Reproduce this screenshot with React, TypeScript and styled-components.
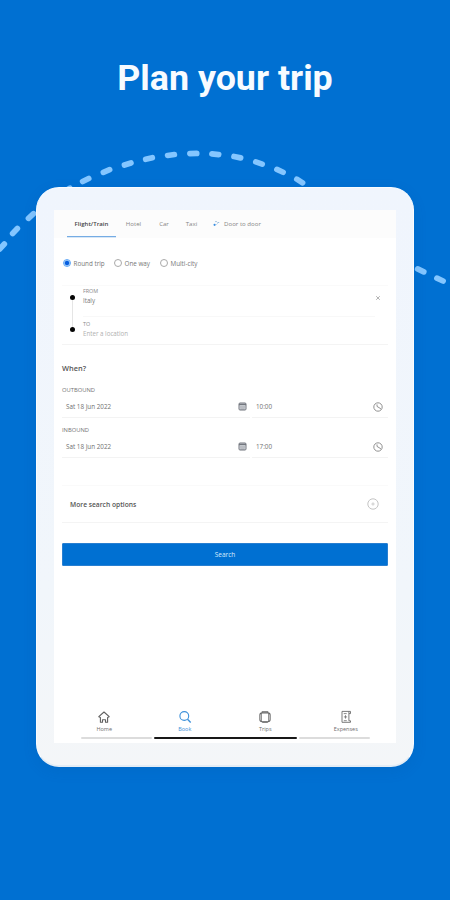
import React from "react";
import styled, { createGlobalStyle } from "styled-components";

const Global = createGlobalStyle`
  * { box-sizing: border-box; }
  body { margin: 0; background: #0070d2; }
`;

const Poster = styled.main`
  position: relative;
  width: 450px;
  height: 900px;
  overflow: hidden;
  display: flex;
  flex-direction: column;
  align-items: center;
  background: #0070d2;
  font-family: "Open Sans", "Noto Sans", sans-serif;
`;

const Title = styled.h1`
  margin: 56px 0 0;
  height: 131px;
  flex: none;
  font: 700 35.8px/44px Roboto, sans-serif;
  color: #f7fbff;
  white-space: nowrap;
`;

const Trail = styled.svg`
  position: absolute;
  left: 0;
  top: 140px;
  width: 450px;
  height: 160px;
`;

const Tablet = styled.section`
  position: relative;
  width: 378px;
  height: 580px;
  flex: none;
  border-radius: 23px;
  background: linear-gradient(#f0f5fd, #f1f6fb 70%, #f4f6f8);
  border: 1px solid #fafcff;
  border-bottom: 2px solid #e3ecf5;
  padding: 22px 17px 22px 17px;
  box-shadow: 0 4px 14px rgba(0, 70, 150, 0.12);
`;

const Screen = styled.div`
  height: 533px;
  display: flex;
  flex-direction: column;
  background: #fff;
`;

const Tabs = styled.nav`
  display: flex;
  height: 28px;
  padding-left: 13px;
  background: #fcfcfc;
`;

const Tab = styled.div<{ $width: number; $active?: boolean }>`
  width: ${(p) => p.$width}px;
  height: 27px;
  display: flex;
  justify-content: center;
  gap: 4px;
  font-size: 6.1px;
  line-height: 27px;
  font-weight: ${(p) => (p.$active ? 600 : 400)};
  color: ${(p) => (p.$active ? "#454545" : "#858585")};
  box-shadow: ${(p) => (p.$active ? "inset 0 -1px #75ace4, 0 0.5px #b5d2f0" : "none")};
  white-space: nowrap;
  svg { margin-top: 10px; }
`;

const Form = styled.div`
  padding: 0 8px;
  display: flex;
  flex-direction: column;
`;

const Radios = styled.div`
  display: flex;
  height: 47px;
  padding: 20px 0 0 0.5px;
`;

const Choice = styled.label<{ $width: number }>`
  display: flex;
  align-items: center;
  gap: 3px;
  width: ${(p) => p.$width}px;
  height: 10px;
  font-size: 6.3px;
  color: #777;
  white-space: nowrap;
`;

const Dot = styled.span<{ $on?: boolean }>`
  width: 8px;
  height: 8px;
  flex: none;
  border-radius: 50%;
  border: 1px solid ${(p) => (p.$on ? "#62a8f6" : "#a9a9a9")};
  background: ${(p) => (p.$on ? "radial-gradient(circle, #075fe0 42%, #b9dafa 65%)" : "#fff")};
`;

const Route = styled.div`
  display: grid;
  grid-template-columns: 21px 1fr 13px;
  height: 60px;
  border-top: 1px solid #fafafa;
  border-bottom: 1px solid #f4f4f4;
`;

const Stops = styled.div`
  display: flex;
  flex-direction: column;
  align-items: center;
  padding-top: 9px;
  i { width: 5px; height: 5px; flex: none; border-radius: 50%; background: #050505; }
  span { width: 1px; height: 27px; background: #e5e5e5; }
`;

const Places = styled.div`
  display: flex;
  flex-direction: column;
`;

const Place = styled.div<{ $empty?: boolean }>`
  height: ${(p) => (p.$empty ? 28 : 31)}px;
  padding-top: ${(p) => (p.$empty ? 2 : 0)}px;
  border-bottom: 1px solid ${(p) => (p.$empty ? "transparent" : "#f8f8f8")};
  font-size: 6.2px;
  line-height: 10.5px;
  color: ${(p) => (p.$empty ? "#b0b0b0" : "#777")};
  small { display: block; font-size: 5.4px; line-height: 10px; color: #888; }
`;

const Clear = styled.span`
  display: flex;
  align-items: center;
  height: 24px;
`;

const Heading = styled.h2`
  margin: 17px 0 11px;
  font-size: 7.4px;
  line-height: 12px;
  font-weight: 600;
  color: #555;
`;

const Leg = styled.div`
  height: 40px;
`;

const LegName = styled.div`
  height: 11px;
  font-size: 5.8px;
  line-height: 11px;
  color: #737373;
`;

const Fields = styled.div`
  display: grid;
  grid-template-columns: 188px 136px;
  gap: 2px;
`;

const Field = styled.div<{ $end: number }>`
  height: 22px;
  display: flex;
  align-items: center;
  justify-content: space-between;
  padding: 0 ${(p) => p.$end}px 0 4px;
  border-bottom: 1px solid #f3f3f3;
  font-size: 6.3px;
  color: #707070;
`;

const More = styled.div`
  margin-top: 20px;
  height: 38px;
  display: flex;
  align-items: center;
  justify-content: space-between;
  padding: 0 9px 0 8px;
  border-top: 1px solid #fafafa;
  border-bottom: 1px solid #f4f4f4;
  font-size: 6.7px;
  font-weight: 600;
  color: #555;
`;

const Search = styled.button`
  margin: 20px 0 0;
  height: 23px;
  padding: 0;
  border: 1px solid #287fd1;
  border-radius: 1px;
  background: #0070d2;
  color: #d9ebfc;
  font: 400 6.5px "Open Sans", sans-serif;
`;

const Bottom = styled.footer`
  margin-top: auto;
  height: 35px;
`;

const Menu = styled.nav`
  display: grid;
  grid-template-columns: repeat(4, 1fr);
  height: 29px;
  padding: 0 10px;
`;

const Item = styled.div<{ $active?: boolean }>`
  display: flex;
  flex-direction: column;
  align-items: center;
  padding-top: 2px;
  gap: 1px;
  font-size: 5.5px;
  line-height: 8px;
  color: ${(p) => (p.$active ? "#3b8fd8" : "#6e6e6e")};
`;

const Bars = styled.div`
  display: grid;
  grid-template-columns: 71px 143px 71px;
  gap: 2px;
  align-items: center;
  padding-left: 27px;
`;

const Bar = styled.span<{ $dark?: boolean }>`
  height: ${(p) => (p.$dark ? 2.4 : 1.6)}px;
  border-radius: 2px;
  background: ${(p) => (p.$dark ? "#181818" : "#dcdcdc")};
`;

const dashes = [
  [2, 246.5, -47], [15, 231, -46], [31, 216, -42], [48, 202, -36], [67, 190, -32],
  [85.7, 180, -27], [106.5, 171, -23], [127.7, 164, -18], [149, 158.5, -13],
  [171, 155, -8], [193.3, 153.5, -1], [215.3, 154.2, 6], [237.3, 157.2, 12],
  [259, 163, 19], [280, 170.8, 25], [299.7, 181, 32], [420.7, 270.4, 26], [440, 279.6, 25],
];

const Calendar = () => (
  <svg width="9" height="9" viewBox="0 0 9 9" fill="none" stroke="#73777e">
    <rect x="1" y="1" width="7" height="7" rx="1" fill="#e0e3e8" />
    <path d="M1 2.5h7" strokeWidth="1.5" />
    <path d="M2 5h5M2.2 7h4.6" strokeWidth=".7" />
  </svg>
);

const Clock = () => (
  <svg width="10" height="10" viewBox="0 0 10 10" fill="none" stroke="#868686" strokeWidth=".9">
    <circle cx="5" cy="5" r="4.2" />
    <path d="M4 2.4v2l3.9 2.4" />
  </svg>
);

const Plus = () => (
  <svg width="12" height="12" viewBox="0 0 12 12" fill="none" stroke="#bdbdbd" strokeWidth=".9">
    <circle cx="6" cy="6" r="5.2" />
    <path d="M4.3 6h3.4M6 4.3v3.4" strokeWidth=".7" />
  </svg>
);

const House = () => (
  <svg width="14" height="14" viewBox="0 0 14 14" fill="none" stroke="#606060" strokeWidth="1.1">
    <path d="M1.8 6.7 7 2l5.2 4.7-1.6.7v4.9H8.5V9.8h-3v2.5H3.4V7.4z" strokeLinejoin="round" />
  </svg>
);

const Glass = () => (
  <svg width="14" height="14" viewBox="0 0 14 14" fill="none" stroke="#3e91da" strokeWidth="1.1">
    <circle cx="6.3" cy="6" r="4.4" />
    <path d="m9.5 9.2 3.2 3.3" strokeWidth="1.4" />
  </svg>
);

const Suitcase = () => (
  <svg width="14" height="14" viewBox="0 0 14 14" fill="none" stroke="#666" strokeWidth="1.1">
    <rect x="1.9" y="2.9" width="10.2" height="8.8" rx="2.2" />
    <path d="M3.5 3.2v8.2M10.5 3.2v8.2" strokeWidth=".7" />
    <path d="M4.3 2.7V1.8h5.4v.9M4.2 12.2h5.6" />
  </svg>
);

const Receipt = () => (
  <svg width="14" height="14" viewBox="0 0 14 14" fill="none" stroke="#6c6c6c" strokeWidth=".9">
    <path d="M3 12.3V1.4h8.5v2.2H9.9v7.2h1.6v1.5H3ZM9.9 3.6V1.4" />
    <path d="M4.7 3.6h3M6.5 5.2v3.4M4.9 6.9h3.2M4.8 10.7h3" strokeWidth=".8" />
  </svg>
);

const DoorMark = () => (
  <svg width="7" height="7" viewBox="0 0 7 7" fill="none">
    <circle cx="1.6" cy="4.8" r="1.1" fill="#3a8ee0" />
    <path d="M2.2 1.6h1.6M4.5 2.5h1.7M3.5 4.5l1.1-1" stroke="#8fb5d8" strokeWidth=".9" />
  </svg>
);

const Journey = ({ name, time }: { name: string; time: string }) => (
  <Leg>
    <LegName>{name}</LegName>
    <Fields>
      <Field $end={3}>Sat 18 Jun 2022<Calendar /></Field>
      <Field $end={5}>{time}<Clock /></Field>
    </Fields>
  </Leg>
);

export default function App() {
  return (
    <Poster>
      <Global />
      <Trail viewBox="0 140 450 160">
        {dashes.map(([x, y, angle]) => (
          <path
            key={x}
            d="M-3.4 0h6.8"
            transform={`translate(${x} ${y}) rotate(${angle})`}
            stroke="#84c6ff"
            strokeWidth="5.7"
            strokeLinecap="round"
          />
        ))}
      </Trail>
      <Title>Plan your trip</Title>
      <Tablet>
        <Screen>
          <Tabs>
            <Tab $width={49} $active>Flight/Train</Tab>
            <Tab $width={35}>Hotel</Tab>
            <Tab $width={26}>Car</Tab>
            <Tab $width={29}>Taxi</Tab>
            <Tab $width={62}><DoorMark />Door to door</Tab>
          </Tabs>
          <Form>
            <Radios>
              <Choice $width={51}><Dot $on />Round trip</Choice>
              <Choice $width={46}><Dot />One way</Choice>
              <Choice $width={45}><Dot />Multi-city</Choice>
            </Radios>
            <Route>
              <Stops><i /><span /><i /></Stops>
              <Places>
                <Place><small>FROM</small>Italy</Place>
                <Place $empty><small>TO</small>Enter a location</Place>
              </Places>
              <Clear>
                <svg width="6" height="6" viewBox="0 0 6 6" stroke="#aaa" strokeWidth=".9">
                  <path d="m1.2 1.2 3.6 3.6M4.8 1.2 1.2 4.8" />
                </svg>
              </Clear>
            </Route>
            <Heading>When?</Heading>
            <Journey name="OUTBOUND" time="10:00" />
            <Journey name="INBOUND" time="17:00" />
            <More>More search options<Plus /></More>
            <Search>Search</Search>
          </Form>
          <Bottom>
            <Menu>
              <Item><House />Home</Item>
              <Item $active><Glass />Book</Item>
              <Item><Suitcase />Trips</Item>
              <Item><Receipt />Expenses</Item>
            </Menu>
            <Bars><Bar /><Bar $dark /><Bar /></Bars>
          </Bottom>
        </Screen>
      </Tablet>
    </Poster>
  );
}
